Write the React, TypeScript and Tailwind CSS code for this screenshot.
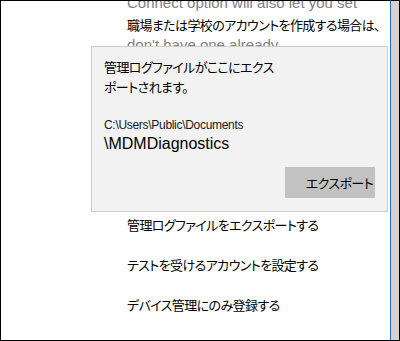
export default function App() {
  const jp = { fontFamily: '"Noto Sans CJK JP", "Liberation Sans", sans-serif', fontFeatureSettings: '"palt"' }
  const lat = { fontFamily: '"Liberation Sans", Arial, sans-serif' }

  return (
    <div className="relative flex h-[341px] w-[400px] overflow-hidden border border-black bg-white">
      <div className="flex-1 pl-[126px]">
        <div className="-mt-[8px] whitespace-nowrap text-[15px] leading-[20px] text-[#808080]" style={lat}>
          Connect option will also let you set
        </div>
        <div className="mt-[2px] whitespace-nowrap text-[13px] leading-[20px] tracking-[-0.6px] text-black" style={jp}>
          職場または学校のアカウントを作成する場合は、
        </div>
        <div className="whitespace-nowrap text-[15px] leading-[20px] text-[#808080]" style={lat}>
          don't have one already
        </div>

        <div className="mt-[160px] flex flex-col whitespace-nowrap text-[13px] leading-[20px] tracking-[-0.6px] text-black" style={jp}>
          <div className="h-[40px]">管理ログファイルをエクスポートする</div>
          <div className="h-[40px]">テストを受けるアカウントを設定する</div>
          <div className="h-[40px]">デバイス管理にのみ登録する</div>
        </div>
      </div>

      <div className="w-px bg-[#1f6fbf]" />
      <div className="w-[8px] bg-[#dccfcf]" />

      <div className="absolute left-[90px] top-[45px] flex h-[166px] w-[297px] flex-col border border-[#cccccc] bg-[#f2f2f2] px-[12px] pt-[10px] pb-[13px]">
        <div className="text-[13px] leading-[20px] tracking-[-0.6px] text-black" style={jp}>
          管理ログファイルがここにエクス
          <br />
          ポートされます。
        </div>
        <div className="mt-[21px] whitespace-nowrap text-[12px] leading-[14px] tracking-[-0.3px] text-[#1a1a1a]" style={lat}>
          C:\Users\Public\Documents
        </div>
        <div className="mt-[2px] text-[16px] leading-[20px] text-black" style={lat}>
          \MDMDiagnostics
        </div>
        <div className="mt-auto flex justify-end">
          <div className="flex h-[31px] w-[90px] items-center justify-end bg-[#c2c2c2] pr-[2px] text-[13px] tracking-[-0.6px] text-black" style={jp}>
            エクスポート
          </div>
        </div>
      </div>
    </div>
  )
}
